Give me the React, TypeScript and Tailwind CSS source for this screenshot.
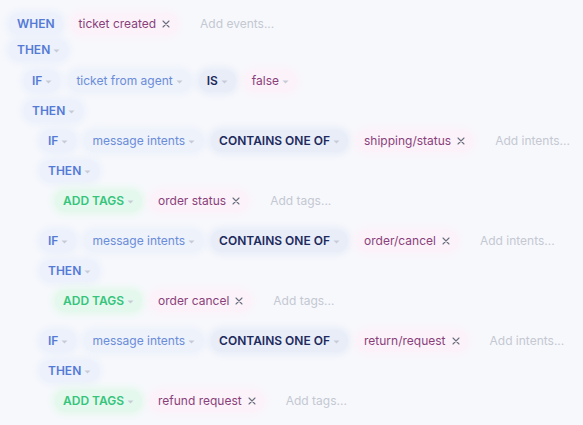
import React from 'react';

type Tone = 'keyword' | 'field' | 'operator' | 'value' | 'action';

const toneClass: Record<Tone, string> = {
  keyword: 'bg-[#ecf1fb] text-[#557ad6] font-semibold shadow-[0_0_7px_3px_#ecf1fb]',
  field: 'bg-[#edf2fb] text-[#6b8cd8] shadow-[0_0_7px_3px_#edf2fb]',
  operator: 'bg-[#e8edf8] text-[#1e2a5c] font-semibold shadow-[0_0_7px_3px_#e8edf8]',
  value: 'bg-[#fbf3f9] text-[#8a3f7b] shadow-[0_0_7px_3px_#fbf3f9]',
  action: 'bg-[#e5f8ed] text-[#35c47c] font-semibold shadow-[0_0_7px_3px_#e5f8ed]',
};

const Caret = () => (
  <svg width="7" height="4" viewBox="0 0 7 4" className="ml-[3px] mt-px">
    <path d="M0.5 0.5 L6.5 0.5 L3.5 3.5 Z" fill="#c6cbd7" />
  </svg>
);

const Cross = () => (
  <svg width="8" height="8" viewBox="0 0 8 8" className="ml-1.5">
    <path d="M1 1 L7 7 M7 1 L1 7" stroke="#6a6e7c" strokeWidth="1.1" strokeLinecap="round" />
  </svg>
);

const Pill: React.FC<{ tone: Tone; label: string; caret?: boolean; remove?: boolean }> = ({
  tone,
  label,
  caret,
  remove,
}) => (
  <span className={`flex items-center h-[22px] px-2 rounded-full whitespace-nowrap ${toneClass[tone]}`}>
    {label}
    {caret && <Caret />}
    {remove && <Cross />}
  </span>
);

const Placeholder: React.FC<{ label: string }> = ({ label }) => (
  <span className="flex items-center h-[22px] px-2 ml-1.5 text-[#c4c8d2] whitespace-nowrap">{label}</span>
);

const Row: React.FC<{ children: React.ReactNode; indent?: string }> = ({ children, indent = '' }) => (
  <div className={`flex items-center gap-2 ${indent}`}>{children}</div>
);

const intentRules = [
  { intent: 'shipping/status', tag: 'order status' },
  { intent: 'order/cancel', tag: 'order cancel' },
  { intent: 'return/request', tag: 'refund request' },
];

export default function App() {
  return (
    <div
      className="w-[583px] h-[425px] overflow-hidden bg-[#f7f8fc] text-[12px] pl-[9px] pt-[13px]"
      style={{ fontFamily: 'Inter, "Noto Sans", sans-serif' }}
    >
      <Row>
        <Pill tone="keyword" label="WHEN" />
        <Pill tone="value" label="ticket created" remove />
        <Placeholder label="Add events..." />
      </Row>
      <div className="mt-1">
        <Row>
          <Pill tone="keyword" label="THEN" caret />
        </Row>
      </div>

      <div className="mt-[9px] pl-[15px] flex flex-col gap-2">
        <Row>
          <Pill tone="keyword" label="IF" caret />
          <Pill tone="field" label="ticket from agent" caret />
          <Pill tone="operator" label="IS" caret />
          <Pill tone="value" label="false" caret />
        </Row>
        <Row>
          <Pill tone="keyword" label="THEN" caret />
        </Row>

        <div className="pl-4 flex flex-col gap-[18px]">
          {intentRules.map((rule) => (
            <div key={rule.intent} className="flex flex-col gap-2">
              <Row>
                <Pill tone="keyword" label="IF" caret />
                <Pill tone="field" label="message intents" caret />
                <Pill tone="operator" label="CONTAINS ONE OF" caret />
                <Pill tone="value" label={rule.intent} remove />
                <Placeholder label="Add intents..." />
              </Row>
              <Row>
                <Pill tone="keyword" label="THEN" caret />
              </Row>
              <Row indent="pl-[15px]">
                <Pill tone="action" label="ADD TAGS" caret />
                <Pill tone="value" label={rule.tag} remove />
                <Placeholder label="Add tags..." />
              </Row>
            </div>
          ))}
        </div>
      </div>
    </div>
  );
}
